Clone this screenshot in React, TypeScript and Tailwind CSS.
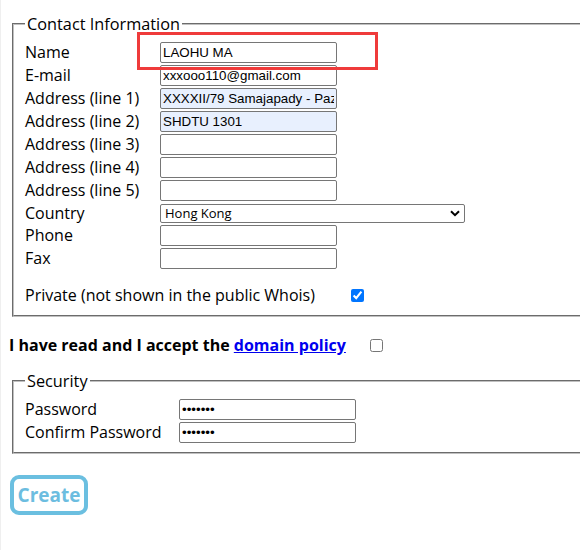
import { useState } from "react";

type Row = {
  label: string;
  value?: string;
  filled?: boolean;
};

const contactRows: Row[] = [
  { label: "Name", value: "LAOHU MA" },
  { label: "E-mail", value: "xxxooo110@gmail.com" },
  { label: "Address (line 1)", value: "XXXXII/79 Samajapady - Pazhayangadi", filled: true },
  { label: "Address (line 2)", value: "SHDTU 1301", filled: true },
  { label: "Address (line 3)" },
  { label: "Address (line 4)" },
  { label: "Address (line 5)" },
];

const TextBox = ({ value, filled, type = "text" }: { value?: string; filled?: boolean; type?: string }) => {
  return (
    <input
      type={type}
      defaultValue={value ?? ""}
      className={`h-[21px] w-[177px] rounded-[2px] border border-[#767676] px-[2px] text-[13.333px] text-black outline-none font-['Liberation_Sans',Arial,sans-serif] ${
        filled ? "bg-[#e8f0fe]" : "bg-white"
      }`}
    />
  );
};

const Label = ({ children }: { children: string }) => (
  <span className="pb-[1px] text-[16px] leading-[22px] text-black">{children}</span>
);

export default function App() {
  const [priv, setPriv] = useState(true);
  const [accept, setAccept] = useState(false);

  return (
    <div className="relative h-[550px] w-[580px] overflow-hidden border-l border-[#efefef] bg-white font-['Open_Sans','Noto_Sans',sans-serif] text-black">
      <fieldset className="ml-[11px] mt-[14px] w-[700px] border-2 border-[#c0c0c0] [border-style:groove] pb-[8px] pl-[11px] pt-[7px]">
        <legend className="px-[2px] text-[16.3px] leading-[20px]">Contact Information</legend>
        <div className="grid grid-cols-[135px_auto]">
          {contactRows.map((row) => (
            <div key={row.label} className="col-span-2 grid h-[23px] grid-cols-subgrid items-center">
              <Label>{row.label}</Label>
              <TextBox value={row.value} filled={row.filled} />
            </div>
          ))}
          <div className="col-span-2 grid h-[22px] grid-cols-subgrid items-center">
            <Label>Country</Label>
            <div className="relative h-[19px] w-[305px]">
              <select
                defaultValue="HK"
                className="block h-[19px] w-full appearance-none rounded-[2px] border border-[#767676] bg-white pl-[4px] text-[13px] leading-[17px] text-black outline-none"
              >
                <option value="HK">Hong Kong</option>
                <option value="CN">China</option>
              </select>
              <svg
                className="pointer-events-none absolute right-[5px] top-[6px]"
                width="10"
                height="7"
                viewBox="0 0 10 7"
                fill="none"
              >
                <path d="M1 1.2 5 5.2 9 1.2" stroke="#000" strokeWidth="2" />
              </svg>
            </div>
          </div>
          <div className="col-span-2 grid h-[23px] grid-cols-subgrid items-center">
            <Label>Phone</Label>
            <TextBox />
          </div>
          <div className="col-span-2 grid h-[23px] grid-cols-subgrid items-center">
            <Label>Fax</Label>
            <TextBox />
          </div>
        </div>
        <div className="mt-[14px] flex h-[23px] items-center">
          <span className="w-[326px] pb-[1px] text-[16px] leading-[22px]">Private (not shown in the public Whois)</span>
          <input
            type="checkbox"
            checked={priv}
            onChange={(e) => setPriv(e.target.checked)}
            className="h-[13px] w-[13px]"
          />
        </div>
      </fieldset>

      <div className="ml-[8px] mt-[17px] flex h-[23px] items-center">
        <span className="w-[361px] text-[16px] font-bold leading-[23px]">
          I have read and I accept the{" "}
          <a href="#" className="text-[#0000ee] underline">
            domain policy
          </a>
        </span>
        <input
          type="checkbox"
          checked={accept}
          onChange={(e) => setAccept(e.target.checked)}
          className="h-[13px] w-[13px]"
        />
      </div>

      <fieldset className="ml-[11px] mt-[14px] w-[700px] border-2 border-[#c0c0c0] [border-style:groove] pb-[8px] pl-[11px] pt-[7px]">
        <legend className="px-[2px] text-[16.3px] leading-[20px]">Security</legend>
        <div className="grid grid-cols-[154px_auto]">
          <div className="col-span-2 grid h-[23px] grid-cols-subgrid items-center">
            <Label>Password</Label>
            <TextBox type="password" value="1234567" />
          </div>
          <div className="col-span-2 grid h-[23px] grid-cols-subgrid items-center">
            <Label>Confirm Password</Label>
            <TextBox type="password" value="1234567" />
          </div>
        </div>
      </fieldset>

      <button className="ml-[9px] mt-[21px] flex h-[40px] w-[78px] items-center justify-center rounded-[9px] border-4 border-[#6bbfe0] bg-white text-[19px] font-bold text-[#6cbde0]">
        Create
      </button>

      <div className="absolute left-[136px] top-[32px] h-[38px] w-[241px] border-[3px] border-[#ef3b3b]" />
    </div>
  );
}
